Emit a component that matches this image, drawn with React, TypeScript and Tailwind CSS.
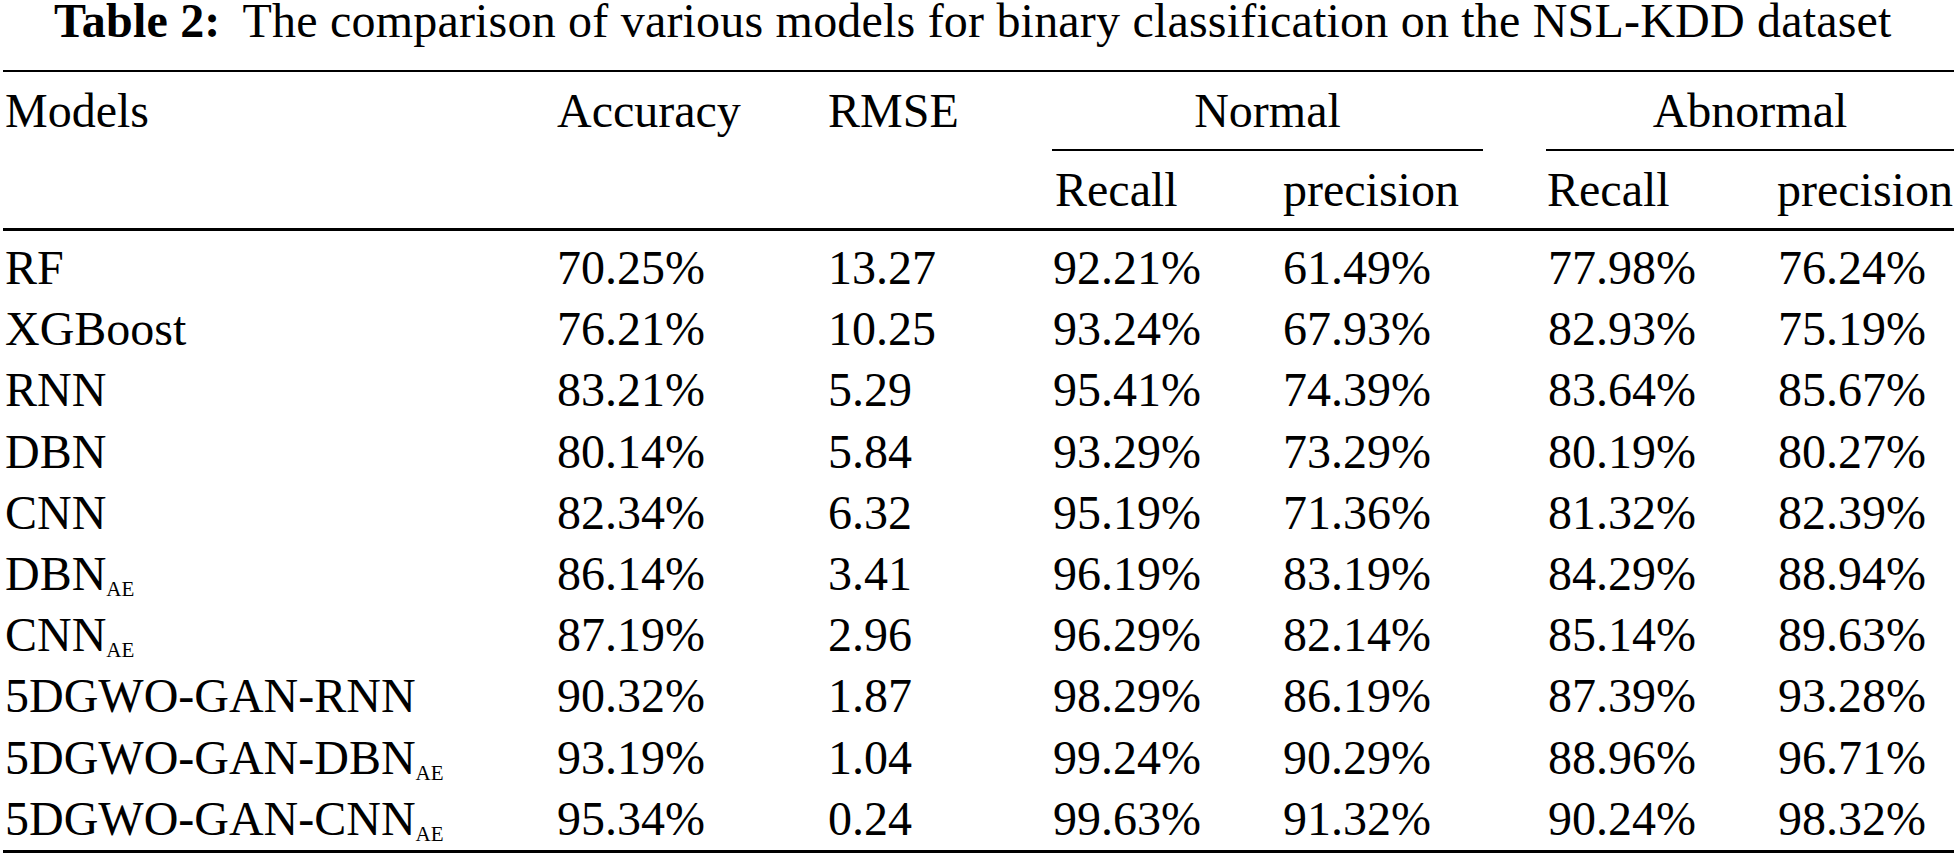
import React from "react";

type Row = {
  name: string;
  sub?: string;
  acc: string;
  rmse: string;
  nRecall: string;
  nPrec: string;
  aRecall: string;
  aPrec: string;
};

const rows: Row[] = [
  { name: "RF", acc: "70.25%", rmse: "13.27", nRecall: "92.21%", nPrec: "61.49%", aRecall: "77.98%", aPrec: "76.24%" },
  { name: "XGBoost", acc: "76.21%", rmse: "10.25", nRecall: "93.24%", nPrec: "67.93%", aRecall: "82.93%", aPrec: "75.19%" },
  { name: "RNN", acc: "83.21%", rmse: "5.29", nRecall: "95.41%", nPrec: "74.39%", aRecall: "83.64%", aPrec: "85.67%" },
  { name: "DBN", acc: "80.14%", rmse: "5.84", nRecall: "93.29%", nPrec: "73.29%", aRecall: "80.19%", aPrec: "80.27%" },
  { name: "CNN", acc: "82.34%", rmse: "6.32", nRecall: "95.19%", nPrec: "71.36%", aRecall: "81.32%", aPrec: "82.39%" },
  { name: "DBN", sub: "AE", acc: "86.14%", rmse: "3.41", nRecall: "96.19%", nPrec: "83.19%", aRecall: "84.29%", aPrec: "88.94%" },
  { name: "CNN", sub: "AE", acc: "87.19%", rmse: "2.96", nRecall: "96.29%", nPrec: "82.14%", aRecall: "85.14%", aPrec: "89.63%" },
  { name: "5DGWO-GAN-RNN", acc: "90.32%", rmse: "1.87", nRecall: "98.29%", nPrec: "86.19%", aRecall: "87.39%", aPrec: "93.28%" },
  { name: "5DGWO-GAN-DBN", sub: "AE", acc: "93.19%", rmse: "1.04", nRecall: "99.24%", nPrec: "90.29%", aRecall: "88.96%", aPrec: "96.71%" },
  { name: "5DGWO-GAN-CNN", sub: "AE", acc: "95.34%", rmse: "0.24", nRecall: "99.63%", nPrec: "91.32%", aRecall: "90.24%", aPrec: "98.32%" },
];

// column widths measured from the scan
const cols = "grid grid-cols-[554px_271px_225px_230px_265px_230px_179px]";

export default function App() {
  return (
    <div className="w-[1954px] h-[862px] bg-white text-black font-['Liberation_Serif','Times_New_Roman',serif] text-[48px] overflow-hidden">
      {/* caption */}
      <div className="h-[40px] leading-[40px] pt-[1px] pl-[54px] whitespace-nowrap tracking-[0.2px]">
        <span className="font-bold mr-[22px]">Table 2:</span>
        <span>The comparison of various models for binary classification on the NSL-KDD dataset</span>
      </div>

      <div className="mt-[30px] ml-[3px] h-[2px] bg-black" />

      {/* header */}
      <div className={cols}>
        <div className="row-start-1 col-start-1 pl-[5px] leading-[77px]">Models</div>
        <div className="row-start-1 col-start-2 pl-[3px] leading-[77px]">Accuracy</div>
        <div className="row-start-1 col-start-3 pl-[3px] leading-[77px]">RMSE</div>
        <div className="row-start-1 col-start-4 col-span-2 ml-[2px] mr-[62px] text-center leading-[77px]">Normal</div>
        <div className="row-start-1 col-start-6 col-span-2 ml-[1px] text-center leading-[77px]">Abnormal</div>

        <div className="row-start-2 col-start-4 col-span-2 ml-[2px] mr-[62px] h-[2px] bg-black" />
        <div className="row-start-2 col-start-6 col-span-2 ml-[1px] h-[2px] bg-black" />

        <div className="row-start-3 col-start-4 pl-[5px] leading-[77px]">Recall</div>
        <div className="row-start-3 col-start-5 pl-[3px] leading-[77px]">precision</div>
        <div className="row-start-3 col-start-6 pl-[2px] leading-[77px]">Recall</div>
        <div className="row-start-3 col-start-7 pl-[2px] leading-[77px]">precision</div>
      </div>

      <div className="ml-[3px] h-[3px] bg-black" />

      {/* body */}
      <div className={`${cols} pt-[6px]`}>
        {rows.map((r, i) => (
          <React.Fragment key={i}>
            <div className="h-[61.2px] leading-[61.2px] pl-[5px] whitespace-nowrap">
              {r.name}
              {r.sub && <span className="relative top-[6px] text-[21px] leading-none">{r.sub}</span>}
            </div>
            <div className="h-[61.2px] leading-[61.2px] pl-[3px]">{r.acc}</div>
            <div className="h-[61.2px] leading-[61.2px] pl-[3px]">{r.rmse}</div>
            <div className="h-[61.2px] leading-[61.2px] pl-[3px]">{r.nRecall}</div>
            <div className="h-[61.2px] leading-[61.2px] pl-[3px]">{r.nPrec}</div>
            <div className="h-[61.2px] leading-[61.2px] pl-[3px]">{r.aRecall}</div>
            <div className="h-[61.2px] leading-[61.2px] pl-[3px]">{r.aPrec}</div>
          </React.Fragment>
        ))}
      </div>

      <div className="mt-[1px] ml-[3px] h-[3px] bg-black" />
    </div>
  );
}
